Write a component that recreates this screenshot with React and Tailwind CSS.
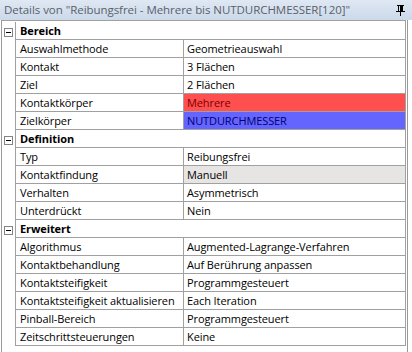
import React from "react";

const groups = [
  {
    title: "Bereich",
    rows: [
      ["Auswahlmethode", "Geometrieauswahl"],
      ["Kontakt", "3 Flächen"],
      ["Ziel", "2 Flächen"],
      ["Kontaktkörper", "Mehrere", "red"],
      ["Zielkörper", "NUTDURCHMESSER", "blue"],
    ],
  },
  {
    title: "Definition",
    rows: [
      ["Typ", "Reibungsfrei"],
      ["Kontaktfindung", "Manuell", "gray"],
      ["Verhalten", "Asymmetrisch"],
      ["Unterdrückt", "Nein"],
    ],
  },
  {
    title: "Erweitert",
    rows: [
      ["Algorithmus", "Augmented-Lagrange-Verfahren"],
      ["Kontaktbehandlung", "Auf Berührung anpassen"],
      ["Kontaktsteifigkeit", "Programmgesteuert"],
      ["Kontaktsteifigkeit aktualisieren", "Each Iteration"],
      ["Pinball-Bereich", "Programmgesteuert"],
      ["Zeitschrittsteuerungen", "Keine"],
    ],
  },
];

function valueClass(kind) {
  if (kind === "red") return "bg-[#ff4f4f] text-[#7a0000]";
  if (kind === "blue") return "bg-[#6464ff] text-[#00006e]";
  if (kind === "gray") return "bg-[#e6e5e3] text-black";
  return "bg-white text-black";
}

function Pin() {
  return (
    <svg width="9" height="11" viewBox="0 0 9 11" className="block shrink-0">
      <rect x="1" y="0" width="7" height="1" fill="#000" />
      <rect x="2" y="1" width="1" height="5" fill="#000" />
      <rect x="4" y="1" width="3" height="5" fill="#000" />
      <rect x="0" y="6" width="9" height="1" fill="#000" />
      <rect x="4" y="7" width="1" height="4" fill="#000" />
    </svg>
  );
}

function Minus() {
  return (
    <div className="w-[9px] h-[9px] border border-[#848484] bg-white flex items-center justify-center">
      <div className="w-[5px] h-[1px] bg-black" />
    </div>
  );
}

export default function App() {
  return (
    <div
      className="w-[412px] h-[352px] bg-white overflow-hidden flex flex-col text-[11px] tracking-[-0.1px] text-black"
      style={{ fontFamily: "'Open Sans', 'Noto Sans', sans-serif" }}
    >
      <div className="h-[20px] shrink-0 bg-gradient-to-b from-[#dfe8f3] to-[#cbd9ea] flex items-center justify-between pl-[4px] pr-[7px]">
        <span className="text-[11.5px] text-[#5a6068] whitespace-nowrap tracking-[-0.05px] leading-none">
          Details von "Reibungsfrei - Mehrere bis NUTDURCHMESSER[120]"
        </span>
        <Pin />
      </div>
      <div className="flex-1 ml-[1px] w-[407px] border-l border-r border-[#9a9a9a] flex flex-col">
        <div className="w-[404px] border-t border-r border-[#a0a0a0] pt-[1px]">
          {groups.map((g) => (
            <div key={g.title} className="flex">
              <div className="w-[14px] shrink-0 border-r border-[#a0a0a0] pl-[2px] pt-[6px]">
                <Minus />
              </div>
              <div className="flex-1 flex flex-col">
                <div className="h-[18px] border-b border-[#a0a0a0] flex items-center pl-[4px] font-bold leading-none">
                  {g.title}
                </div>
                {g.rows.map(([k, v, kind]) => (
                  <div key={k} className="h-[18px] border-b border-[#a0a0a0] flex">
                    <div className="w-[168px] shrink-0 border-r border-[#a0a0a0] flex items-center pl-[4px] whitespace-nowrap leading-none">
                      {k}
                    </div>
                    <div className={`flex-1 flex items-center pl-[3px] whitespace-nowrap leading-none ${valueClass(kind)}`}>
                      {v}
                    </div>
                  </div>
                ))}
              </div>
            </div>
          ))}
        </div>
      </div>
    </div>
  );
}
